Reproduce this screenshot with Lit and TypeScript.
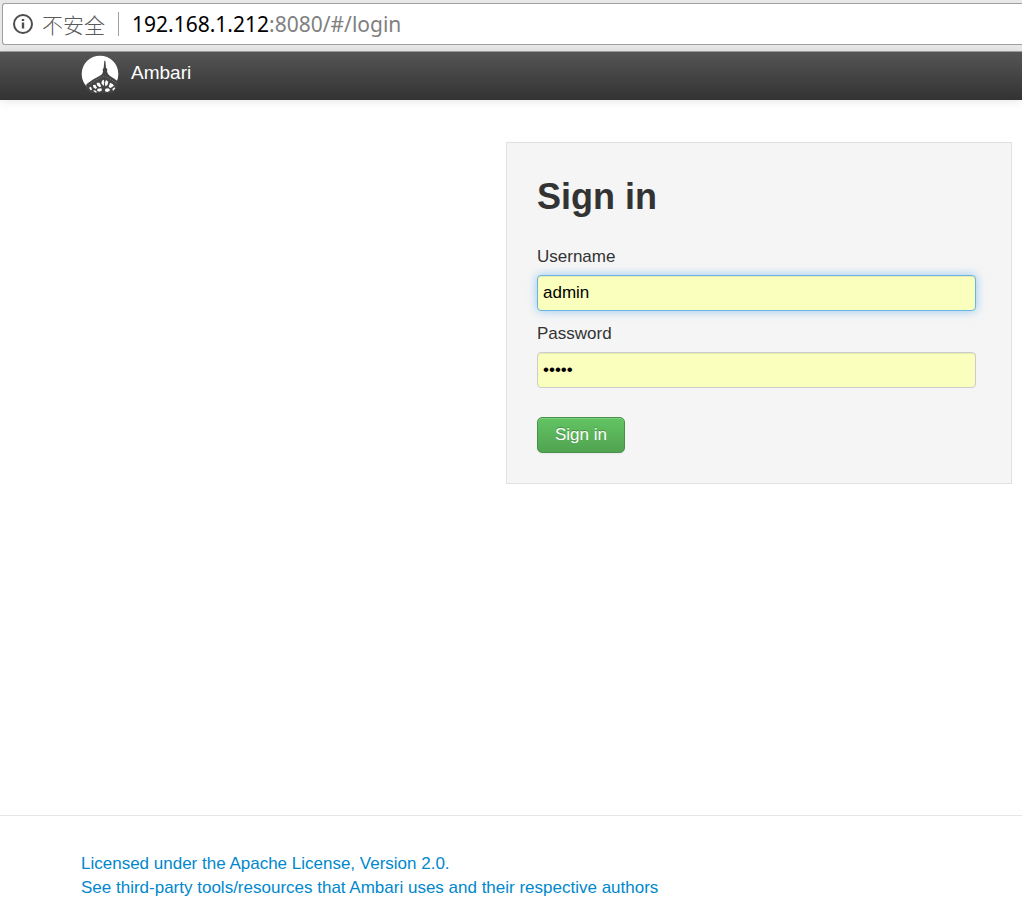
import { LitElement, html, css, svg } from "lit";
import { customElement } from "lit/decorators.js";

const infoIcon = svg`
  <svg class="info" viewBox="0 0 20 20" aria-hidden="true">
    <circle cx="10" cy="10" r="9" fill="none" stroke="#4d4d4d" stroke-width="2"/>
    <path d="M8.8 5h2.4v2H8.8zM8.8 8.6h2.4v6H8.8z" fill="#4d4d4d"/>
  </svg>`;

const logo = svg`
  <svg class="logo" viewBox="3 5 114 114" aria-hidden="true">
    <circle cx="60" cy="62" r="55" fill="#fff"/>
    <path d="M73 22h3l2 21 4 5-1 6 3 8 6 6 13 8 14 11-3 9-5 10-9 10-14 9-16 4-20-1-15-6-17-17 4-3-4-4 2-6 20-14 17-9 9-6 3-8-1-7 3-4z" fill="#444"/>
    <path d="M28 94l20-14 24-12 22 11 17 12" fill="none" stroke="#aaa" stroke-width="1.5" stroke-dasharray="3 3"/>
    <g fill="#fff">
      <path d="M66 82l5-3 2 8-2 11-7-8z"/>
      <path d="M78 80l7 5-3 11-6 3-1-11z"/>
      <path d="M50 88l8 0 6 11-5 3-8-6z"/>
      <path d="M90 88l8 4 4 5-10 7-6-3z"/>
      <path d="M39 95l7-1 5 9-4 4-7-5z"/>
      <path d="M27 103l6-3 3 9-4 2z"/>
      <path d="M53 106l11-1 2 6-8 4-7-3z"/>
      <path d="M76 106l9-1 6 5-8 6-8-2z"/>
      <path d="M39 112l6-1 6 5-3 2z"/>
      <path d="M97 107l6-5 3 3-7 8z"/>
    </g>
  </svg>`;

@customElement("app-root")
export class AppRoot extends LitElement {
  static styles = css`
    :host {
      display: flex;
      flex-direction: column;
      min-height: 100vh;
      overflow-x: hidden;
      background: #fff;
      color: #333;
      font: 17px/24px "Liberation Sans", Arial, sans-serif;
    }
    * { box-sizing: border-box; }
    .toolbar {
      padding: 3px 0 6px 2px;
      background: #e8e8e8;
      border-bottom: 1px solid #a0a0a0;
    }
    .address {
      display: flex;
      align-items: center;
      height: 42px;
      padding-left: 10px;
      border: 1px solid #a0a0a0;
      border-right: 0;
      border-radius: 3px 0 0 3px;
      background: #fff;
      white-space: nowrap;
    }
    .info { width: 20px; height: 20px; margin-right: 9px; }
    .security {
      padding-right: 13px;
      margin-right: 13px;
      border-right: 1px solid #a0a0a0;
      color: #5a5a5a;
      font: 300 21px/24px "Noto Sans CJK SC", sans-serif;
    }
    .url {
      color: #808080;
      font: 21px/24px "Noto Sans", sans-serif;
    }
    .host { color: #000; }
    .navbar {
      height: 48px;
      padding: 3px 81px 7px;
      background: linear-gradient(#555, #333);
      box-shadow: 0 1px 10px rgba(0, 0, 0, 0.1);
    }
    .brand {
      display: inline-flex;
      align-items: flex-start;
      gap: 12px;
      color: #fff;
      font-size: 19px;
      line-height: 36px;
      text-decoration: none;
    }
    .logo { width: 38px; height: 38px; }
    .main {
      flex: 1;
      display: grid;
      grid-template-columns: 1fr 1fr;
      align-items: start;
      padding: 42px 10px 42px 0;
    }
    .login {
      grid-column: 2;
      display: flex;
      flex-direction: column;
      padding: 30px 35px 30px 30px;
      border: 1px solid #e1e1e1;
      background: #f5f5f5;
    }
    .title {
      margin: 0 0 24px;
      font-size: 36px;
      line-height: 48px;
    }
    .label { margin-bottom: 6px; }
    .field {
      width: 100%;
      height: 36px;
      margin: 0 0 11px;
      padding: 0 5px;
      border: 1px solid #ccc;
      border-radius: 4px;
      outline: 0;
      background: #faffbd;
      box-shadow: inset 0 1px 1px rgba(0, 0, 0, 0.075);
      color: #000;
      font: inherit;
    }
    .active {
      border-color: #6bb3e3;
      box-shadow: inset 0 1px 1px rgba(0, 0, 0, 0.075), 0 0 10px rgba(82, 168, 236, 0.6);
    }
    .submit {
      align-self: flex-start;
      height: 36px;
      margin: 18px 0 0;
      padding: 0 17px;
      border: 1px solid #499249;
      border-radius: 5px;
      background: linear-gradient(#62c462, #51a351);
      box-shadow: inset 0 1px 0 rgba(255, 255, 255, 0.2), 0 1px 2px rgba(0, 0, 0, 0.05);
      color: #fff;
      font: inherit;
      text-shadow: 0 -1px 0 rgba(0, 0, 0, 0.25);
    }
    .footer {
      display: flex;
      flex-direction: column;
      align-items: flex-start;
      padding: 36px 81px 8px;
      border-top: 1px solid #e5e5e5;
    }
    .link { color: #0088cc; text-decoration: none; }
  `;

  render() {
    return html`
      <div class="toolbar">
        <div class="address">
          ${infoIcon}
          <span class="security">不安全</span>
          <span class="url"><span class="host">192.168.1.212</span>:8080/#/login</span>
        </div>
      </div>
      <header class="navbar">
        <a class="brand" href="#/">${logo}<span>Ambari</span></a>
      </header>
      <main class="main">
        <form class="login" @submit=${(e: Event) => e.preventDefault()}>
          <h1 class="title">Sign in</h1>
          <label class="label" for="username">Username</label>
          <input class="field active" id="username" type="text" value="admin" autocomplete="username">
          <label class="label" for="password">Password</label>
          <input class="field" id="password" type="password" value="admin" autocomplete="current-password">
          <button class="submit" type="submit">Sign in</button>
        </form>
      </main>
      <footer class="footer">
        <a class="link" href="#/license">Licensed under the Apache License, Version 2.0.</a>
        <a class="link" href="#/licenses">See third-party tools/resources that Ambari uses and their respective authors</a>
      </footer>
    `;
  }
}
